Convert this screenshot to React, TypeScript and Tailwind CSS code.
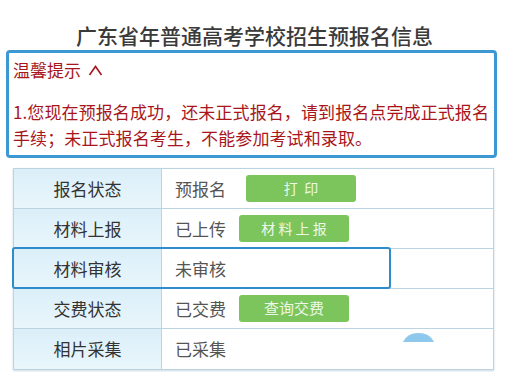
import React from "react";

const font = { fontFamily: '"Noto Sans CJK SC", "Noto Sans", sans-serif' };

function Btn({ children, ml }: { children: React.ReactNode; ml: string }) {
  return (
    <div
      className={`${ml} flex h-[27px] w-[110px] items-center justify-center rounded-[3px] bg-[#7cc55d] text-[14px] text-[#eef8e8]`}
    >
      {children}
    </div>
  );
}

function Row({
  label,
  value,
  extra,
  last,
  highlight,
}: {
  label: string;
  value: string;
  extra?: React.ReactNode;
  last?: boolean;
  highlight?: boolean;
}) {
  return (
    <div className={`relative flex h-[40px] ${last ? "" : "border-b border-[#bcd4e2]"}`}>
      <div className="flex w-[148px] items-center justify-center border-r border-[#bcd4e2] bg-gradient-to-b from-[#dbeff9] to-[#e9f6fc] text-[17px] text-[#333]">
        {label}
      </div>
      <div className="flex flex-1 items-center pl-[13px] text-[17px] text-[#555]">
        <span>{value}</span>
        {extra}
      </div>
      {highlight && (
        <div className="absolute left-[-2px] top-[-2px] h-[42px] w-[379px] rounded-[3px] border-[2.5px] border-[#2e8ccc]" />
      )}
    </div>
  );
}

export default function App() {
  return (
    <div className="relative h-[372px] w-[509px] overflow-hidden bg-white" style={font}>
      <div className="h-[50px] pt-[22px] text-center text-[21px] font-medium leading-[26px] text-[#3a3a3a]">
        广东省年普通高考学校招生预报名信息
      </div>
      <div className="ml-[6px] h-[108px] w-[491px] rounded-[4px] border-[3px] border-[#3c98d2] px-[4px] text-[#a8161c]">
        <div className="mt-[5px] flex h-[24px] items-center text-[17px] leading-[24px]">
          <span>温馨提示</span>
          <svg className="ml-[7px]" width="15" height="11" viewBox="0 0 15 11" fill="none">
            <path d="M1.5 10 L7.5 1.5 L13.5 10" stroke="#a8161c" strokeWidth="1.6" />
          </svg>
        </div>
        <div className="mt-[17px] text-[17px] leading-[26px] tracking-[0.1px]">
          1.您现在预报名成功，还未正式报名，请到报名点完成正式报名手续；未正式报名考生，不能参加考试和录取。
        </div>
      </div>
      <div className="ml-[13px] mt-[10px] w-[481px] border border-[#bcd4e2] shadow-[0_1px_2px_rgba(120,160,190,0.4)]">
        <Row label="报名状态" value="预报名" extra={<Btn ml="ml-[20px]">打&nbsp;&nbsp;印</Btn>} />
        <Row label="材料上报" value="已上传" extra={<Btn ml="ml-[13px]">材&nbsp;料&nbsp;上&nbsp;报</Btn>} />
        <Row label="材料审核" value="未审核" highlight />
        <Row label="交费状态" value="已交费" extra={<Btn ml="ml-[13px]"><span className="text-[15px]">查询交费</span></Btn>} />
        <Row label="相片采集" value="已采集" last />
      </div>
      <svg className="absolute left-[403px] top-[333px]" width="31" height="9" viewBox="0 0 31 9">
        <path d="M0 9 Q4 0 15.5 0 Q27 0 31 9 Z" fill="#8ec8ec" />
      </svg>
    </div>
  );
}
